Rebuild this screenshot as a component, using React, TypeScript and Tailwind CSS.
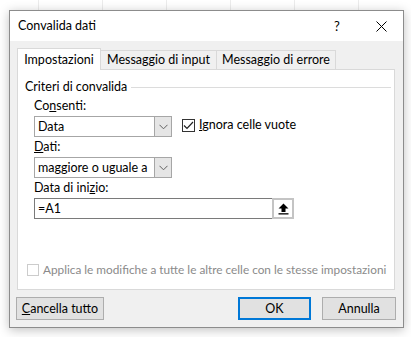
import React from "react";

function Chevron() {
  return (
    <svg width="9" height="6" viewBox="0 0 9 6" fill="none">
      <path d="M0.5 0.8 L4.5 4.8 L8.5 0.8" stroke="#606060" strokeWidth="1" />
    </svg>
  );
}

function Select({ value }: { value: string }) {
  return (
    <div className="flex h-[21px] w-[138px] shrink-0 border border-[#a6a6a6] bg-white">
      <div className="flex flex-1 items-center whitespace-nowrap pl-[3px] text-[12.5px] text-black">{value}</div>
      <div className="flex w-[17px] items-center justify-center border-l border-[#a6a6a6] bg-[#e5e5e5]">
        <Chevron />
      </div>
    </div>
  );
}

function Button({ children, primary, className = "" }: { children: React.ReactNode; primary?: boolean; className?: string }) {
  return (
    <button
      className={
        "flex h-[23px] items-center justify-center whitespace-nowrap bg-[#e1e1e1] text-[12.5px] text-black " +
        (primary ? "border-2 border-[#0078d7] " : "border border-[#adadad] ") +
        className
      }
    >
      {children}
    </button>
  );
}

export default function App() {
  return (
    <div
      className="relative h-[337px] w-[411px] overflow-hidden bg-white pl-[9px] pt-[10px] leading-[16px]"
      style={{ fontFamily: 'Lato, "Noto Sans", sans-serif' }}
    >
      {/* faint sheet grid behind the dialog */}
      <div className="absolute left-0 top-0 h-[10px] w-full">
        {[38, 102, 166, 230, 294, 358].map((x) => (
          <div key={x} className="absolute top-0 h-[10px] w-px bg-[#ececec]" style={{ left: x }} />
        ))}
      </div>

      <div className="relative flex h-[318px] w-[395px] flex-col border border-[#8c8c8c] bg-[#f0f0f0] shadow-[0_2px_10px_rgba(0,0,0,0.25)]">
        {/* title bar */}
        <div className="flex h-[30px] items-center bg-white pl-[8px] text-[12.5px] text-black">
          <span className="flex-1">Convalida dati</span>
          <span className="w-[44px] text-center text-[13px]">?</span>
          <span className="flex w-[44px] items-center justify-center">
            <svg width="11" height="11" viewBox="0 0 11 11">
              <path d="M0.5 0.5 L10.5 10.5 M10.5 0.5 L0.5 10.5" stroke="#000" strokeWidth="1" />
            </svg>
          </span>
        </div>

        <div className="flex flex-1 flex-col px-[7px] pt-[7px]">
          {/* tabs */}
          <div className="relative z-10 -mb-px flex items-end">
            <div className="flex h-[22px] w-[84px] items-center justify-center whitespace-nowrap border border-b-0 border-[#d9d9d9] bg-white text-[12.5px] text-black">
              Impostazioni
            </div>
            <div className="flex h-[20px] w-[116px] items-center justify-center whitespace-nowrap border border-l-0 border-[#d9d9d9] bg-[#f0f0f0] text-[12.5px] text-black">
              Messaggio di input
            </div>
            <div className="flex h-[20px] w-[119px] items-center justify-center whitespace-nowrap border border-l-0 border-[#d9d9d9] bg-[#f0f0f0] text-[12.5px] text-black">
              Messaggio di errore
            </div>
          </div>

          {/* tab panel */}
          <div className="flex h-[221px] w-[378px] flex-col border border-[#d9d9d9] bg-white pl-[7px] pr-[3px] pt-[9px]">
            <div className="flex items-center gap-[4px] whitespace-nowrap text-[12.5px] text-black">
              <span>Criteri di convalida</span>
              <div className="h-px flex-1 bg-[#dcdcdc]" />
            </div>

            <div className="flex flex-col whitespace-nowrap pl-[9px] pt-[3px] text-[12.5px] text-black">
              <div className="leading-[16px]">
                Co<span className="underline">n</span>senti:
              </div>
              <div className="mt-[2px] flex items-start gap-[10px]">
                <Select value="Data" />
                <div className="flex items-center gap-[4px] pt-[1px]">
                  <div className="flex h-[13px] w-[13px] shrink-0 items-center justify-center border border-[#333] bg-white">
                    <svg width="11" height="9" viewBox="0 0 11 9" fill="none">
                      <path d="M1 4.5 L4 7.5 L10 1" stroke="#222" strokeWidth="1.2" />
                    </svg>
                  </div>
                  <span>
                    <span className="underline">I</span>gnora celle vuote
                  </span>
                </div>
              </div>

              <div className="mt-[2px] leading-[16px]">
                <span className="underline">D</span>ati:
              </div>
              <div className="mt-[2px]">
                <Select value="maggiore o uguale a" />
              </div>

              <div className="mt-[2px] leading-[16px]">
                Data di ini<span className="underline">z</span>io:
              </div>
              <div className="mt-[2px] flex h-[21px] w-[260px]">
                <div className="flex flex-1 items-center border border-r-0 border-[#7a7a7a] bg-white pl-[3px]">=A1</div>
                <div className="flex w-[22px] items-center justify-center border-2 border-[#c4c4c4] bg-white">
                  <svg width="11" height="12" viewBox="0 0 11 12">
                    <path d="M5.5 0.5 L10.5 5.5 H7.5 V9 H3.5 V5.5 H0.5 Z" fill="#000" />
                    <rect x="0.5" y="10.2" width="10" height="1.3" fill="#000" />
                  </svg>
                </div>
              </div>
            </div>

            <div className="mt-auto mb-[11px] flex items-center gap-[4px] whitespace-nowrap pl-[2px] text-[#8a8a8a]">
              <div className="h-[12px] w-[12px] shrink-0 border border-[#cccccc] bg-white" />
              <span className="text-[11.8px]">Applica le modifiche a tutte le altre celle con le stesse impostazioni</span>
            </div>
          </div>

          {/* buttons */}
          <div className="-ml-px mt-[7px] flex items-center">
            <Button className="w-[88px]">
              <span className="underline">C</span>ancella tutto
            </Button>
            <div className="flex-1" />
            <Button primary className="w-[73px]">OK</Button>
            <Button className="ml-[11px] w-[74px]">Annulla</Button>
          </div>
        </div>
      </div>
    </div>
  );
}
